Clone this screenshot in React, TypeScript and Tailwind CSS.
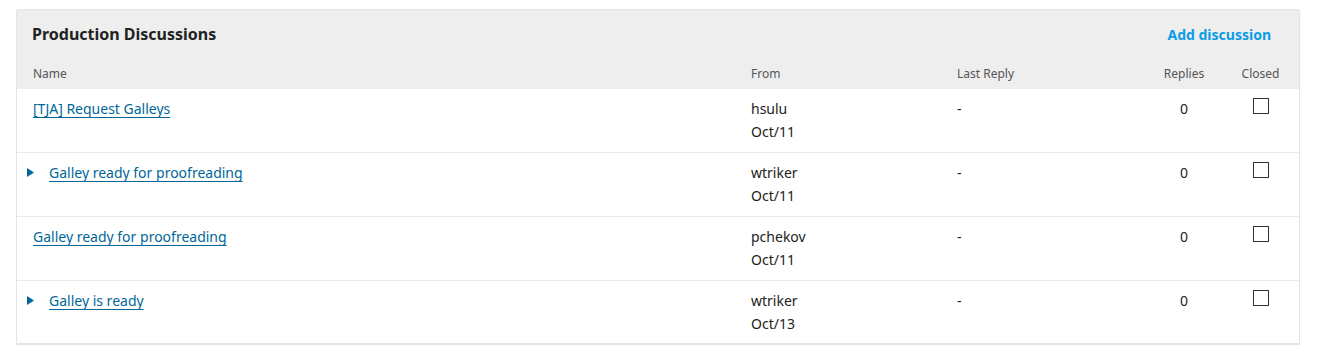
const rows = [
  { title: '[TJA] Request Galleys', from: 'hsulu', date: 'Oct/11', expandable: false },
  { title: 'Galley ready for proofreading', from: 'wtriker', date: 'Oct/11', expandable: true },
  { title: 'Galley ready for proofreading', from: 'pchekov', date: 'Oct/11', expandable: false },
  { title: 'Galley is ready', from: 'wtriker', date: 'Oct/13', expandable: true },
]

const cols = 'grid grid-cols-[718px_206px_189px_76px_1fr]'

function Triangle() {
  return (
    <svg width="7" height="9" viewBox="0 0 7 9" className="shrink-0" aria-hidden="true">
      <path d="M0 0 L7 4.5 L0 9 Z" fill="#006798" />
    </svg>
  )
}

export default function App() {
  return (
    <div className="bg-white min-h-[358px] pt-[9px] font-['Noto_Sans','Open_Sans',sans-serif] text-[#222]">
      <div className="ml-[16px] w-[1284px] border border-[#e4e4e4] rounded-t-[2px] shadow-[0_1px_1px_rgba(0,0,0,0.12)]">
        <div className="bg-[#eeeeee]">
          <div className="flex items-center justify-between pl-[15px] pr-[28px] h-[48px]">
            <h2 className="text-[16px] font-bold text-[#222]">Production Discussions</h2>
            <a href="#" className="text-[14px] font-bold text-[#0b9ce4]">Add discussion</a>
          </div>
          <div className={`${cols} pl-[16px] h-[31px] items-center text-[12px] text-[#555] pt-[1px]`}>
            <div>Name</div>
            <div>From</div>
            <div>Last Reply</div>
            <div className="text-center">Replies</div>
            <div className="text-center">Closed</div>
          </div>
        </div>
        {rows.map((r, i) => (
          <div
            key={i}
            className={`${cols} pl-[16px] pt-[8px] text-[14px] leading-[23px] ${i < rows.length - 1 ? 'h-[64px] border-b border-[#e9e9e9]' : 'h-[62px]'}`}
          >
            <div className="flex items-start">
              {r.expandable ? (
                <span className="flex items-center gap-[15px] -ml-[6px]">
                  <span className="flex items-center h-[23px]"><Triangle /></span>
                  <a href="#" className="text-[#006798] underline underline-offset-[3px]">{r.title}</a>
                </span>
              ) : (
                <a href="#" className="text-[#006798] underline underline-offset-[3px]">{r.title}</a>
              )}
            </div>
            <div>
              <div>{r.from}</div>
              <div>{r.date}</div>
            </div>
            <div>-</div>
            <div className="text-center">0</div>
            <div className="flex justify-center pt-[1px]">
              <span className="block w-[16px] h-[16px] border border-[#333] bg-white ml-[1px]" />
            </div>
          </div>
        ))}
      </div>
    </div>
  )
}
